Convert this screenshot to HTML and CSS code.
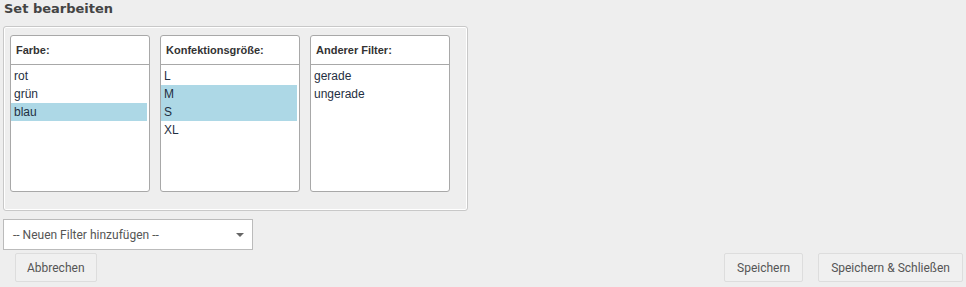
FILE: index.html
```html
<!DOCTYPE html>
<html lang="de">
<head>
    <meta charset="UTF-8">
    <title>Set bearbeiten</title>
    <link rel="stylesheet" href="styles.css">
</head>
<body>
    <h1 class="page-title">Set bearbeiten</h1>

    <div class="filter-panel">
        <div class="filter-box">
            <div class="filter-head">Farbe:</div>
            <ul class="filter-list">
                <li>rot</li>
                <li>grün</li>
                <li class="selected">blau</li>
            </ul>
        </div>
        <div class="filter-box">
            <div class="filter-head">Konfektionsgröße:</div>
            <ul class="filter-list">
                <li>L</li>
                <li class="selected">M</li>
                <li class="selected">S</li>
                <li>XL</li>
            </ul>
        </div>
        <div class="filter-box">
            <div class="filter-head">Anderer Filter:</div>
            <ul class="filter-list">
                <li>gerade</li>
                <li>ungerade</li>
            </ul>
        </div>
    </div>

    <div class="add-filter">
        <span>-- Neuen Filter hinzufügen --</span>
        <svg class="caret" width="8" height="4" viewBox="0 0 8 4" aria-hidden="true">
            <path d="M0 0H8L4 4Z" fill="#666"></path>
        </svg>
    </div>

    <div class="actions">
        <button class="btn">Abbrechen</button>
        <div class="actions-right">
            <button class="btn btn-wide">Speichern</button>
            <button class="btn btn-wide">Speichern &amp; Schließen</button>
        </div>
    </div>
</body>
</html>
```

FILE: styles.css
```css
body {
    margin: 0;
    background-color: #eeeeee;
    font-family: "Liberation Sans", Arial, sans-serif;
    color: #222222;
    width: 966px;
    height: 287px;
    overflow: hidden;
}

.page-title {
    margin: 0;
    padding: 1px 4px 0;
    height: 26px;
    box-sizing: border-box;
    font-family: "DejaVu Sans", Verdana, sans-serif;
    font-size: 13px;
    font-weight: bold;
    color: #444444;
    line-height: 16px;
}

.filter-panel {
    display: flex;
    gap: 10px;
    margin-left: 3px;
    width: 465px;
    height: 185px;
    box-sizing: border-box;
    padding: 8px 6px 0;
    border: 1px solid #c8c8c8;
    border-radius: 3px;
    box-shadow: inset 0 0 0 1px #ffffff;
    background-color: #eeeeee;
}

.filter-box {
    width: 140px;
    height: 157px;
    box-sizing: border-box;
    background-color: #ffffff;
    border: 1px solid #a8a8a8;
    border-radius: 3px;
}

.filter-head {
    height: 29px;
    box-sizing: border-box;
    padding: 8px 5px 0;
    font-size: 11px;
    font-weight: bold;
    color: #333333;
    border-bottom: 1px solid #a8a8a8;
}

.filter-list {
    list-style: none;
    margin: 0;
    padding: 2px 1px 0 0;
}

.filter-list li {
    height: 18px;
    line-height: 18px;
    padding-left: 3px;
    margin-right: 1px;
    font-size: 12px;
    color: #1f2f42;
}

.filter-list li.selected {
    background-color: #add8e6;
}

.add-filter {
    display: flex;
    align-items: center;
    justify-content: space-between;
    margin: 8px 0 0 3px;
    width: 250px;
    height: 31px;
    box-sizing: border-box;
    padding: 0 8px 0 9px;
    background-color: #ffffff;
    border: 1px solid #bbbbbb;
    font-family: Roboto, sans-serif;
    font-size: 12px;
    color: #555555;
}

.actions {
    display: flex;
    justify-content: space-between;
    margin-top: 3px;
    padding: 0 3px 0 15px;
}

.actions-right {
    display: flex;
    gap: 15px;
}

.btn {
    height: 29px;
    padding: 0 11px;
    background-color: #f0f0f0;
    border: 1px solid #dddddd;
    border-radius: 2px;
    font-family: Roboto, sans-serif;
    font-size: 12px;
    color: #555555;
    cursor: pointer;
}

.btn-wide {
    padding: 0 12px;
}
```
